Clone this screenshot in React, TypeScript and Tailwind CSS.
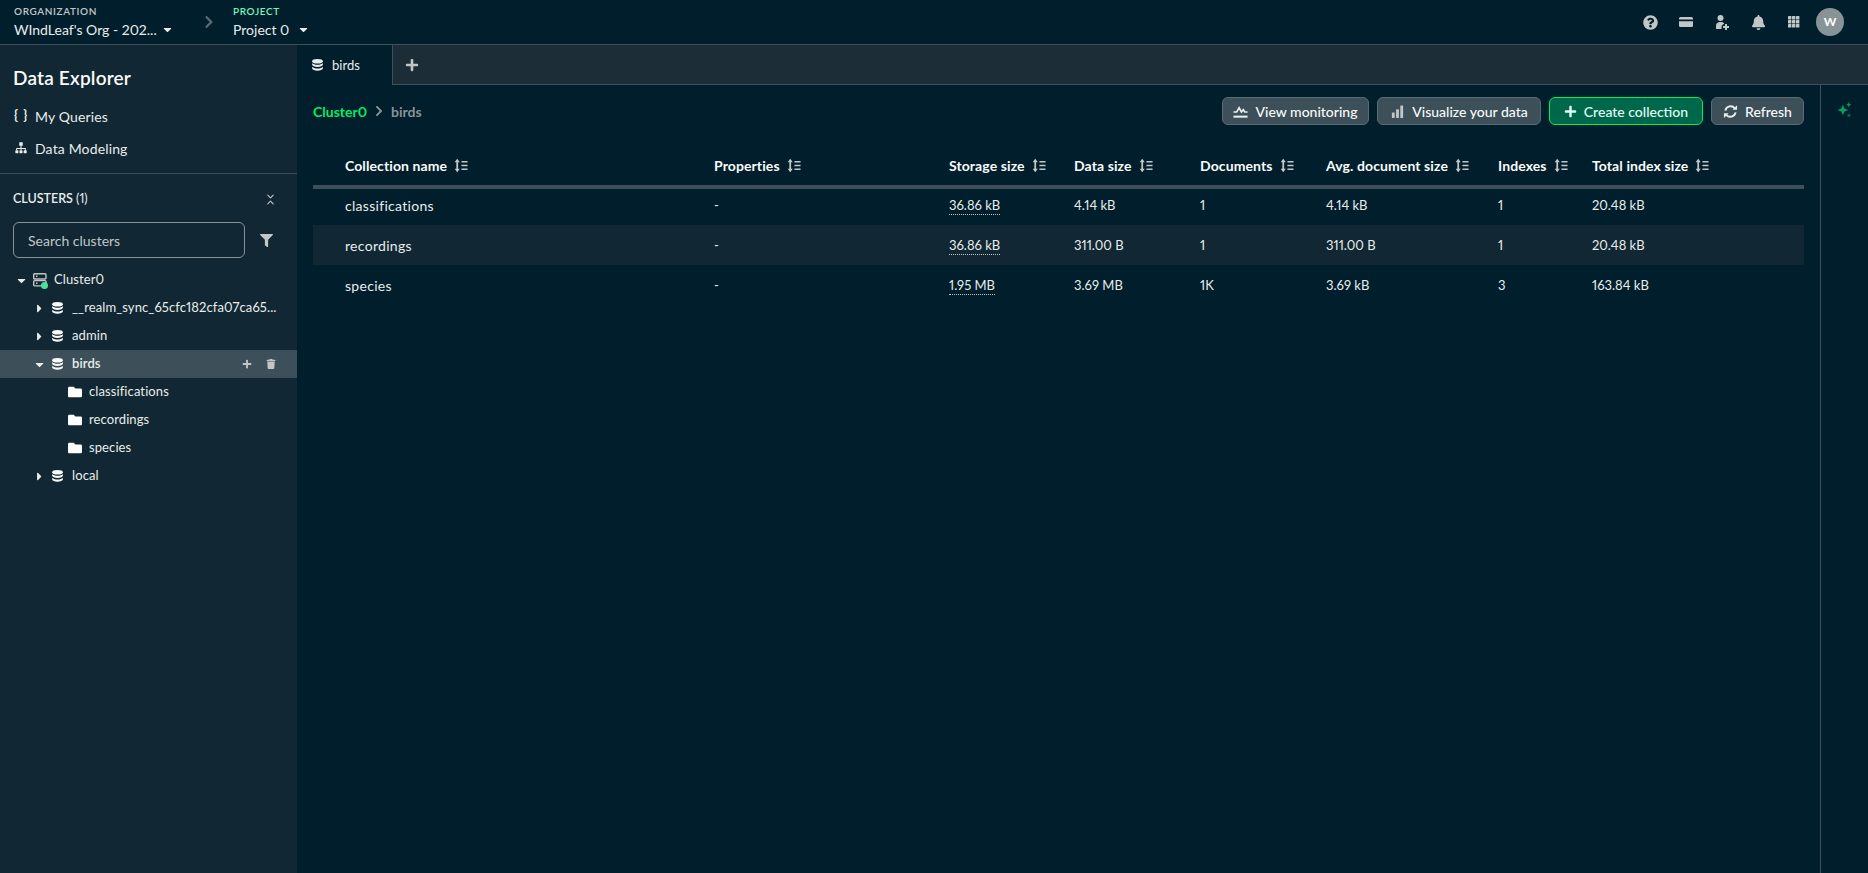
import type { ReactNode } from "react";
import { FaCaretDown, FaCaretRight, FaFolder, FaBell, FaQuestionCircle, FaFilter, FaTrash, FaPlus, FaChevronRight } from "react-icons/fa";
import { LuChevronsDownUp } from "react-icons/lu";

const font = "font-['Lato','Noto_Sans',sans-serif] proportional-nums";

const Db = ({ className = "" }: { className?: string }) => (
  <svg viewBox="0 0 16 16" width="13" height="14" fill="currentColor" className={className}>
    <ellipse cx="8" cy="3.4" rx="6.6" ry="2.8" />
    <path d="M1.4 5.6v2.2c0 1.5 3 2.7 6.6 2.7s6.6-1.2 6.6-2.7V5.6c-1 1.3-3.6 2.2-6.6 2.2S2.4 6.9 1.4 5.6z" />
    <path d="M1.4 10v2.400C1.4 13.900 4.4 15.200 8 15.200s6.600-1.300 6.600-2.800V10c-1 1.300-3.600 2.200-6.600 2.200S2.400 11.300 1.400 10z" />
  </svg>
);

const Sort = () => (
  <svg viewBox="0 0 16 16" width="15" height="15" fill="none" stroke="#c1c7c6" strokeWidth="1.9" className="shrink-0">
    <path d="M4.5 2v12" />
    <path d="M1.8 4.6 4.5.8l2.700 3.800zM1.800 11.400l2.700 3.800 2.700-3.800z" fill="#c1c7c6" stroke="none" />
    <path d="M9 4h6.500M9 8h6.500M9 12h6.500" strokeWidth="1.7" />
  </svg>
);

const Gear = () => (
  <svg viewBox="0 0 16 16" width="14" height="14" fill="currentColor">
    <rect x="6" y="1.5" width="4" height="4" rx="0.5" />
    <path d="M7.4 5h1.200v3h4.900v2.500h-1.200V9.200H8.600v1.300H7.400V9.200H3.700v1.300H2.500V8h4.900z" />
    <rect x="1.5" y="10.5" width="3.5" height="3.5" rx="0.5" />
    <rect x="6.25" y="10.5" width="3.5" height="3.5" rx="0.5" />
    <rect x="11" y="10.5" width="3.5" height="3.5" rx="0.5" />
  </svg>
);

const Apps = () => (
  <svg viewBox="0 0 14 14" width="14" height="14" fill="#c1c7c6">
    {[1, 5, 9].flatMap((y) =>
      [1, 5, 9].map((x) => <rect key={`${x}-${y}`} x={x} y={y} width="3.4" height="3.4" rx="0.5" />),
    )}
  </svg>
);

const Card = () => (
  <svg viewBox="0 0 16 16" width="16" height="16" fill="#c1c7c6">
    <path d="M1 4.500A1.500 1.500 0 0 1 2.500 3h11A1.500 1.500 0 0 1 15 4.500V5.500H1z" />
    <path d="M1 7.200h14v4.300a1.500 1.500 0 0 1-1.500 1.500h-11A1.500 1.500 0 0 1 1 11.500z" />
  </svg>
);

const UserAdd = () => (
  <svg viewBox="0 0 16 16" width="16" height="16" fill="#c1c7c6">
    <circle cx="6.5" cy="4" r="3" />
    <path d="M2 15v-3.500C2 9.300 3.800 8 6 8h1c1.500 0 2.700.6 3.400 1.700A4 4 0 0 0 7.700 15z" />
    <path d="M11 10h2v2h2v2h-2v2h-2v-2H9v-2h2z" />
  </svg>
);

const Sparkle = () => (
  <svg viewBox="0 0 14 15" width="15" height="16" fill="#00a35c">
    <path d="M5.5 2.500 7 6l3.500 1.500L7 9l-1.500 3.500L4 9 .5 7.500 4 6z" />
    <path d="M11 0l.7 1.800 1.800.7-1.800.7L11 5l-.7-1.800-1.800-.7 1.800-.7z" />
    <circle cx="11.2" cy="12.5" r="1.5" fill="#00684a" />
  </svg>
);

const Monitor = () => (
  <svg viewBox="0 0 16 16" width="15" height="15" fill="none" stroke="#e8edeb" strokeWidth="1.8">
    <path d="M.5 8.500h3.500l2.500-4.500 2.500 4.500 2-2.500 1.500 2.500h3" />
    <path d="M.5 13.500h15" strokeWidth="2.2" />
  </svg>
);

const Bars = () => (
  <svg viewBox="0 0 16 16" width="15" height="15" fill="#c1c7c6">
    <rect x="2" y="9" width="3" height="6" rx="0.5" />
    <rect x="6.5" y="5.5" width="3" height="9.5" rx="0.5" />
    <rect x="11" y="1.5" width="3" height="13.5" rx="0.5" />
  </svg>
);

const RefreshIcon = () => (
  <svg viewBox="0 0 16 16" width="15" height="15" fill="none" stroke="#e8edeb" strokeWidth="2">
    <path d="M2.5 7a5.700 5.700 0 0 1 10-2.500" />
    <path d="M13.500 9a5.700 5.700 0 0 1-10 2.500" />
    <path d="M15 1.200v5h-5z" fill="#e8edeb" stroke="none" />
    <path d="M1 14.800v-5h5z" fill="#e8edeb" stroke="none" />
  </svg>
);

const ClusterIcon = () => (
  <span className="relative w-[14px] h-[14px] block">
    <svg viewBox="0 0 14 14" width="14" height="14" fill="none" stroke="#c1c7c6" strokeWidth="1.4">
      <rect x="0.7" y="0.7" width="12.3" height="5.3" rx="1" />
      <rect x="0.7" y="7.6" width="12.3" height="5.3" rx="1" />
      <path d="M3 3.300h1.500M3 10.200h1.500" />
    </svg>
    <span className="absolute -right-[1px] -bottom-[2px] w-[7px] h-[7px] rounded-full bg-[#4ae29a]" />
  </span>
);

function Btn({ icon, children, green, w }: { icon: ReactNode; children: ReactNode; green?: boolean; w: string }) {
  return (
    <button
      className={`${w} ${
        green
          ? "h-[28px] flex items-center justify-center gap-[7px] rounded-[6px] border border-[#00ed64] bg-[#00684a] text-[14px] font-medium text-[#e3fcf7]"
          : "h-[28px] flex items-center justify-center gap-[7px] rounded-[6px] border border-[#5c6c75] bg-[#3d4f58] text-[14px] font-medium text-[#f9fbfa]"
      }`}
    >
      {icon}
      {children}
    </button>
  );
}

const rows = [
  ["classifications", "-", "36.86 kB", "4.14 kB", "1", "4.14 kB", "1", "20.48 kB"],
  ["recordings", "-", "36.86 kB", "311.00 B", "1", "311.00 B", "1", "20.48 kB"],
  ["species", "-", "1.95 MB", "3.69 MB", "1K", "3.69 kB", "3", "163.84 kB"],
];
const heads = ["Collection name", "Properties", "Storage size", "Data size", "Documents", "Avg. document size", "Indexes", "Total index size"];
const cols = "grid grid-cols-[401px_235px_125px_126px_126px_172px_94px_1fr]";

function TreeRow({ open, icon, label, pad, active, actions, gap = "mr-[8px]" }: { open?: boolean; icon: ReactNode; label: string; pad: string; active?: boolean; actions?: boolean; gap?: string }) {
  return (
    <div className={`h-[28px] flex items-center text-[13px] tracking-[0.1px] text-[#e8edeb] ${pad} ${active ? "bg-[#3d4f58] font-semibold" : ""}`}>
      <span className="w-[14px] flex justify-center text-[#e8edeb] text-[13px]">
        {open === undefined ? null : open ? <FaCaretDown /> : <FaCaretRight />}
      </span>
      <span className={`ml-[5px] ${gap} text-[#f9fbfa]`}>{icon}</span>
      <span className="truncate">{label}</span>
      {actions && (
        <span className="ml-auto flex items-center gap-[14px] pr-[21px] text-[#c1c7c6] text-[10px]">
          <FaPlus />
          <FaTrash />
        </span>
      )}
    </div>
  );
}

function CollectionRow({ label }: { label: string }) {
  return (
    <div className="h-[28px] flex items-center pl-[68px] text-[13px] tracking-[0.1px] text-[#e8edeb]">
      <FaFolder className="text-white text-[14px] mr-[7px]" />
      {label}
    </div>
  );
}

export default function App() {
  return (
    <div className={`${font} h-[873px] w-full flex flex-col bg-[#001e2b] text-white overflow-hidden`}>
      <header className="h-[45px] shrink-0 flex items-center border-b border-[#3d4f58] pl-[14px] pr-[24px]">
        <div className="w-[188px]">
          <div className="text-[10px] leading-[12px] font-semibold tracking-[0.6px] text-[#c1c7c6]">ORGANIZATION</div>
          <div className="flex items-center text-[14px] leading-[20px] text-[#e8edeb] mt-[3px]">
            WIndLeaf's Org - 202...
            <FaCaretDown className="ml-[4px] text-[13px]" />
          </div>
        </div>
        <FaChevronRight className="text-[#5c6c75] text-[14px] mr-[17px]" />
        <div>
          <div className="text-[10px] leading-[12px] font-semibold tracking-[0.6px] text-[#71f6ba]">PROJECT</div>
          <div className="flex items-center text-[14px] leading-[20px] text-[#e8edeb] mt-[3px]">
            Project 0
            <FaCaretDown className="ml-[8px] text-[13px]" />
          </div>
        </div>
        <div className="ml-auto flex items-center gap-[20px] text-[#c1c7c6]">
          <span className="w-[16px] flex justify-center text-[15px]"><FaQuestionCircle /></span>
          <span className="w-[16px] flex justify-center"><Card /></span>
          <span className="w-[16px] flex justify-center"><UserAdd /></span>
          <span className="w-[16px] flex justify-center text-[15px]"><FaBell /></span>
          <span className="w-[16px] flex justify-center"><Apps /></span>
          <div className="w-[28px] h-[28px] -ml-[6px] rounded-full bg-[#889397] flex items-center justify-center text-[12px] font-bold text-white">W</div>
        </div>
      </header>

      <div className="flex-1 flex min-h-0">
        <aside className="w-[297px] shrink-0 bg-[#112733]">
          <div className="h-[129px] border-b border-[#3d4f58]">
            <h1 className="pt-[20px] pl-[13px] text-[19px] leading-[26px] font-semibold tracking-[0.2px] text-[#f9fbfa]">Data Explorer</h1>
            <div className="mt-[9px] h-[32px] flex items-center pl-[14px] text-[14px] tracking-[0.15px] text-[#e8edeb]">
              <span className="w-[21px] text-[13px] font-bold tracking-[1px]">{"{ }"}</span>My Queries
            </div>
            <div className="h-[32px] flex items-center pl-[14px] text-[14px] tracking-[0.15px] text-[#e8edeb]">
              <span className="w-[21px]"><Gear /></span>Data Modeling
            </div>
          </div>
          <div className="h-[40px] mt-[5px] flex items-center pl-[13px] pr-[20px] text-[12.5px] font-semibold text-[#e8edeb]">
            CLUSTERS&nbsp;<span className="font-normal">(1)</span>
            <LuChevronsDownUp className="ml-auto text-[13px] text-[#c1c7c6]" />
          </div>
          <div className="flex items-center pl-[13px] mt-[3px]">
            <div className="w-[232px] h-[36px] rounded-[6px] border border-[#889397] flex items-center pl-[14px] text-[14px] text-[#c1c7c6]">Search clusters</div>
            <FaFilter className="ml-[15px] text-[#c1c7c6] text-[13px]" />
          </div>
          <div className="mt-[8px]">
            <TreeRow open icon={<ClusterIcon />} label="Cluster0" pad="pl-[14px]" gap="mr-[7px]" />
            <TreeRow open={false} icon={<Db />} label="__realm_sync_65cfc182cfa07ca65..." pad="pl-[32px]" />
            <TreeRow open={false} icon={<Db />} label="admin" pad="pl-[32px]" />
            <TreeRow open icon={<Db />} label="birds" pad="pl-[32px]" active actions />
            <CollectionRow label="classifications" />
            <CollectionRow label="recordings" />
            <CollectionRow label="species" />
            <TreeRow open={false} icon={<Db />} label="local" pad="pl-[32px]" />
          </div>
        </aside>

        <main className="flex-1 min-w-0 flex flex-col">
          <div className="h-[40px] shrink-0 flex bg-[#1c2d38] border-b border-[#3d4f58]">
            <div className="w-[96px] h-[40px] bg-[#001e2b] border-r border-[#3d4f58] flex items-center pl-[14px] gap-[8px] text-[13px] text-[#e8edeb]">
              <Db /><span className="pt-[1px]">birds</span>
            </div>
            <FaPlus className="ml-[12px] mt-[13px] text-[14px] text-[#c1c7c6]" />
          </div>
          <div className="flex-1 flex min-h-0">
            <div className="flex-1 min-w-0 pl-[16px] pr-[16px]">
              <div className="h-[52px] flex items-center justify-between">
                <div className="flex items-center text-[14px] font-bold">
                  <span className="text-[#00ed64]">Cluster0</span>
                  <FaChevronRight className="mx-[6px] text-[12px] text-[#889397]" />
                  <span className="text-[#889397]">birds</span>
                </div>
                <div className="flex items-center gap-[8px]">
                  <Btn w="w-[147px]" icon={<Monitor />}>View monitoring</Btn>
                  <Btn w="w-[164px]" icon={<Bars />}>Visualize your data</Btn>
                  <Btn w="w-[154px]" green icon={<FaPlus className="text-[13px]" />}>Create collection</Btn>
                  <Btn w="w-[93px]" icon={<RefreshIcon />}>Refresh</Btn>
                </div>
              </div>
              <div className={`${cols} h-[52px] pt-[8px] border-b-[4px] border-[#3d4f58] items-center text-[14px] font-bold tracking-[0.1px] text-[#f9fbfa]`}>
                {heads.map((h, i) => (
                  <div key={h} className={`flex items-center gap-[6px] ${i === 0 ? "pl-[32px]" : ""}`}>
                    {h}
                    <Sort />
                  </div>
                ))}
              </div>
              <div className="-mt-[4px]">
                {rows.map((r, i) => (
                  <div key={r[0]} className={`${cols} h-[40px] items-center text-[13px] text-[#e8edeb] ${i === 1 ? "bg-[#112733]" : ""}`}>
                    {r.map((c, j) => (
                      <div key={j} className={j === 0 ? "pl-[32px] text-[14px] tracking-[0.3px]" : "pt-[2px]"}>
                        {j === 2 ? <span className="border-b border-dotted border-[#c1c7c6] pb-[1px]">{c}</span> : c}
                      </div>
                    ))}
                  </div>
                ))}
              </div>
            </div>
            <div className="w-[48px] shrink-0 border-l border-[#3d4f58] flex justify-center pt-[17px]">
              <Sparkle />
            </div>
          </div>
        </main>
      </div>
    </div>
  );
}
